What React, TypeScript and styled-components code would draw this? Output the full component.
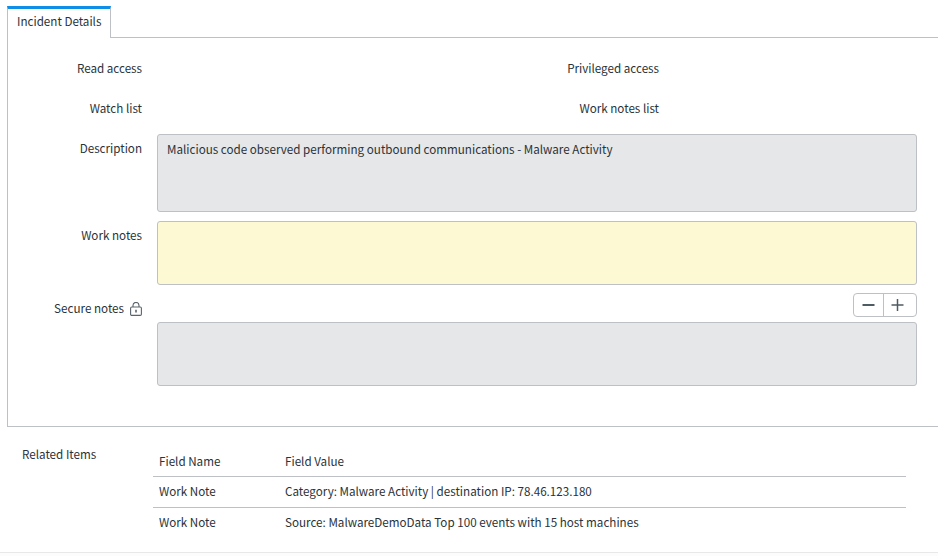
import styled, { createGlobalStyle } from "styled-components";

const GlobalStyle = createGlobalStyle`
  html, body {
    margin: 0;
    padding: 0;
    background: #fff;
  }
  body {
    font-family: "Noto Sans CJK SC", "Noto Sans", sans-serif;
    font-size: 11.65px;
    color: #293339;
  }
`;

const Page = styled.div`
  width: 938px;
  height: 556px;
  overflow: hidden;
  padding-top: 6px;
  box-sizing: border-box;
`;

const TabBar = styled.div`
  display: flex;
  height: 31px;
  margin-left: 7px;
  border-bottom: 1px solid #bdc0c4;
`;

const Tab = styled.div`
  width: 104px;
  height: 32px;
  box-sizing: border-box;
  background: #fff;
  border: 1px solid #bdc0c4;
  border-top: 3px solid #0f8ee8;
  border-bottom: none;
  padding-left: 9px;
  line-height: 24px;
  white-space: nowrap;
`;

const Panel = styled.section`
  margin-left: 7px;
  height: 389px;
  box-sizing: border-box;
  border-left: 1px solid #bdc0c4;
  border-bottom: 1px solid #bdc0c4;
  padding: 20px 21px 0 0;
`;

const TwoColumns = styled.div<{ $height: number }>`
  display: grid;
  grid-template-columns: 134px 517px;
  height: ${(p) => p.$height}px;
  line-height: 20px;
  text-align: right;
`;

const FieldRow = styled.div<{ $gap: number }>`
  display: grid;
  grid-template-columns: 134px 1fr;
  column-gap: 15px;
  margin-bottom: ${(p) => p.$gap}px;
`;

const Label = styled.label<{ $top: number }>`
  display: flex;
  justify-content: flex-end;
  align-items: flex-start;
  gap: 6px;
  line-height: 20px;
  padding-top: ${(p) => p.$top}px;
  white-space: nowrap;
`;

const Box = styled.div<{ $height: number; $bg: string }>`
  height: ${(p) => p.$height}px;
  box-sizing: border-box;
  background: ${(p) => p.$bg};
  border: 1px solid #bdc0c4;
  border-radius: 3px;
  padding: 5px 9px;
  line-height: 18px;
`;

const ToolRow = styled.div`
  display: flex;
  justify-content: flex-end;
  margin-bottom: 5px;
`;

const ButtonGroup = styled.div`
  display: flex;
  height: 24px;
  width: 64px;
  box-sizing: border-box;
  border: 1px solid #bdc0c4;
  border-radius: 4px;
`;

const GroupButton = styled.div<{ $width: number; $divider?: boolean }>`
  width: ${(p) => p.$width}px;
  box-sizing: border-box;
  display: flex;
  align-items: center;
  justify-content: center;
  padding-right: ${(p) => (p.$divider ? 5 : 0)}px;
  border-left: ${(p) => (p.$divider ? "1px solid #bdc0c4" : "none")};
`;

const LockSlot = styled.span`
  display: flex;
  margin-top: 4px;
`;

const Related = styled.section`
  display: grid;
  grid-template-columns: 145px 753px;
  padding: 17px 0 0 8px;
`;

const RelatedLabel = styled.div`
  padding-left: 14px;
  line-height: 20px;
`;

const Table = styled.div`
  margin-top: 7px;
`;

const TableRow = styled.div<{ $last?: boolean }>`
  display: grid;
  grid-template-columns: 126px 1fr;
  height: 31px;
  box-sizing: border-box;
  padding: 4px 0 0 6px;
  line-height: 20px;
  border-bottom: ${(p) => (p.$last ? "none" : "1px solid #bdc0c4")};
`;

const HeaderRow = styled(TableRow)`
  height: 26px;
  padding-top: 0;
`;

const Footer = styled.div`
  margin-top: 13px;
  height: 5px;
  border-top: 1px solid #e6e8ea;
  background: #fcfcfc;
`;

const LockIcon = () => (
  <svg width="12" height="14" viewBox="0 0 12 14" fill="none" stroke="#5a646b" strokeWidth="1.1">
    <path d="M3 5V3.4a3 3 0 0 1 6 0V5" />
    <rect x="0.6" y="5" width="10.8" height="8.4" rx="1.2" />
    <path d="M6 7.8v2.6" strokeWidth="1.6" />
  </svg>
);

const MinusIcon = () => (
  <svg width="13" height="14" viewBox="0 0 13 14" stroke="#4f5b63" strokeWidth="2">
    <path d="M0.5 7h12" />
  </svg>
);

const PlusIcon = () => (
  <svg width="13" height="14" viewBox="0 0 13 14" stroke="#4f5b63" strokeWidth="1.5">
    <path d="M0.5 7h12M6.5 1v12" />
  </svg>
);

export default function App() {
  return (
    <Page>
      <GlobalStyle />
      <TabBar>
        <Tab>Incident Details</Tab>
      </TabBar>
      <Panel>
        <TwoColumns $height={40}>
          <span>Read access</span>
          <span>Privileged access</span>
        </TwoColumns>
        <TwoColumns $height={36}>
          <span>Watch list</span>
          <span>Work notes list</span>
        </TwoColumns>
        <FieldRow $gap={9}>
          <Label $top={4}>Description</Label>
          <Box $height={78} $bg="#e6e7e9">
            Malicious code observed performing outbound communications - Malware Activity
          </Box>
        </FieldRow>
        <FieldRow $gap={8}>
          <Label $top={4}>Work notes</Label>
          <Box $height={64} $bg="#fcf9d3" />
        </FieldRow>
        <FieldRow $gap={0}>
          <Label $top={5}>
            Secure notes
            <LockSlot>
              <LockIcon />
            </LockSlot>
          </Label>
          <ToolRow>
            <ButtonGroup>
              <GroupButton $width={29}>
                <MinusIcon />
              </GroupButton>
              <GroupButton $width={33} $divider>
                <PlusIcon />
              </GroupButton>
            </ButtonGroup>
          </ToolRow>
        </FieldRow>
        <FieldRow $gap={0}>
          <span />
          <Box $height={64} $bg="#e6e7e9" />
        </FieldRow>
      </Panel>
      <Related>
        <RelatedLabel>Related Items</RelatedLabel>
        <Table>
          <HeaderRow>
            <span>Field Name</span>
            <span>Field Value</span>
          </HeaderRow>
          <TableRow>
            <span>Work Note</span>
            <span>Category: Malware Activity | destination IP: 78.46.123.180</span>
          </TableRow>
          <TableRow $last>
            <span>Work Note</span>
            <span>Source: MalwareDemoData Top 100 events with 15 host machines</span>
          </TableRow>
        </Table>
      </Related>
      <Footer />
    </Page>
  );
}
